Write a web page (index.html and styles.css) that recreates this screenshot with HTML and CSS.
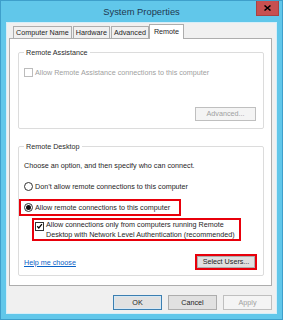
FILE: index.html
```html
<!DOCTYPE html>
<html>
<head>
<meta charset="utf-8">
<link rel="stylesheet" href="styles.css">
</head>
<body>
<div class="window">
  <div class="titlebar">
    <span></span>
    <div class="title">System Properties</div>
    <div class="close"><svg width="7" height="6" viewBox="0 0 7 6"><path d="M0.5 0.5 L6.5 5.5 M6.5 0.5 L0.5 5.5" stroke="#000" stroke-width="1.5" fill="none"/></svg></div>
  </div>
  <div class="client">
    <div class="tabs">
      <div class="tab">Computer Name</div>
      <div class="tab">Hardware</div>
      <div class="tab">Advanced</div>
      <div class="tab active">Remote</div>
    </div>
    <div class="panel">
      <fieldset class="group ga">
        <legend>Remote Assistance</legend>
        <div class="row disabled"><span class="box"></span><span>Allow Remote Assistance connections to this computer</span></div>
        <div class="btnrow"><button class="btn disabled adv">Advanced...</button></div>
      </fieldset>
      <fieldset class="group gd">
        <legend>Remote Desktop</legend>
        <p class="intro">Choose an option, and then specify who can connect.</p>
        <div class="row radiorow"><span class="radio"></span><span>Don’t allow remote connections to this computer</span></div>
        <div class="hl hl1"><span class="radio on"></span><span>Allow remote connections to this computer</span></div>
        <div class="hl hl2"><span class="box checked"><svg width="9" height="9" viewBox="0 0 9 9"><path d="M1.6 4.2 L3.6 6.4 L7.6 1.4" stroke="#000" stroke-width="1.6" fill="none"/></svg></span><span class="ml">Allow connections only from computers running Remote<br>Desktop with Network Level Authentication (recommended)</span></div>
        <div class="footer">
          <a class="link" href="#">Help me choose</a>
          <div class="hl hl3"><button class="btn sel">Select Users...</button></div>
        </div>
      </fieldset>
    </div>
    <div class="buttons">
      <button class="btn bottom def">OK</button>
      <button class="btn bottom">Cancel</button>
      <button class="btn bottom disabled">Apply</button>
    </div>
  </div>
</div>
</body>
</html>
```
FILE: styles.css
```css
* { box-sizing: border-box; }
html, body { margin: 0; padding: 0; }
body {
  width: 283px;
  height: 320px;
  overflow: hidden;
  font-family: "Liberation Sans", Arial, sans-serif;
  font-size: 7.2px;
  color: #1e1e1e;
}
.window {
  width: 283px;
  height: 320px;
  background: #61c7ea;
  border: 1px solid #3e9fcb;
  display: flex;
  flex-direction: column;
}
.titlebar {
  height: 21px;
  display: grid;
  grid-template-columns: 1fr auto 1fr;
  align-items: start;
}
.title {
  font-size: 9.4px;
  color: #1f3850;
  line-height: 20px;
  padding-top: 1px;
}
.close {
  justify-self: end;
  margin-right: 3px;
  width: 23px;
  height: 15px;
  background: #c75050;
  border: 1px solid #a84242;
  border-top: none;
  display: flex;
  align-items: center;
  justify-content: center;
}
.client {
  margin: 0 5px 5px 5px;
  flex: 1;
  background: #f0f0f0;
  box-shadow: inset 0 0 0 1px #d6eef8;
  display: flex;
  flex-direction: column;
  padding: 0 1px 0 1px;
}
.tabs {
  display: flex;
  align-items: flex-end;
  padding: 2px 0 0 6px;
  height: 16px;
  position: relative;
  z-index: 1;
}
.tab {
  height: 12px;
  line-height: 11px;
  padding: 0 2px 0 2px;
  border: 1px solid #adadad;
  border-bottom: none;
  background: #f0f0f0;
  margin-right: 1px;
  white-space: nowrap;
}
.tab.active {
  height: 15px;
  margin-bottom: -1px;
  background: #fff;
  padding: 1px 4px 0 4px;
  line-height: 11px;
  margin-left: -1px;
}
.panel {
  margin: 0 4px 0 2px;
  height: 248px;
  background: #fff;
  border: 1px solid #adadad;
  padding: 9px 7px 0 8px;
}
.group {
  margin: 0;
  border: 1px solid #dcdcdc;
  border-radius: 2px;
  padding: 0;
  min-width: 0;
}
.group legend {
  margin-left: 5px;
  padding: 0 2px;
  line-height: 9px;
  color: #2a2a2a;
}
.row {
  display: flex;
  align-items: center;
  height: 10px;
  white-space: nowrap;
}
.ga .row { margin: 10px 0 0 5px; }
.disabled { color: #a0a0a0; }
.box {
  width: 9px;
  height: 9px;
  border: 1px solid #333;
  background: #fff;
  margin-right: 2px;
  flex: none;
  display: flex;
  align-items: center;
  justify-content: center;
}
.box svg { display: block; }
.row.disabled .box { border-color: #bcbcbc; }
.btnrow {
  display: flex;
  justify-content: flex-end;
  margin: 30px 7px 7px 0;
}
.btn {
  font-family: "Liberation Sans", Arial, sans-serif;
  font-size: 7.2px;
  background: #e1e1e1;
  border: 1px solid #adadad;
  color: #1e1e1e;
  padding: 0;
  margin: 0;
  height: 14px;
  line-height: 12px;
}
.btn.disabled {
  background: #f4f4f4;
  border-color: #bfbfbf;
  color: #a0a0a0;
}
.adv { width: 61px; }
.gd { margin-top: 13px; padding-bottom: 5px; }
.intro { margin: 10px 0 0 5px; line-height: 10px; }
.radiorow { margin: 10px 0 0 5px; }
.radio {
  width: 9px;
  height: 9px;
  border: 1px solid #333;
  border-radius: 50%;
  background: #fff;
  margin-right: 2px;
  flex: none;
  display: flex;
  align-items: center;
  justify-content: center;
}
.radio.on::after {
  content: "";
  width: 5px;
  height: 5px;
  border-radius: 50%;
  background: #111;
}
.hl {
  border: 2px solid #e8000b;
}
.hl1 {
  margin-top: 8px;
  display: flex;
  align-items: center;
  height: 17px;
  width: 162px;
  padding-left: 3px;
  white-space: nowrap;
}
.hl2 {
  margin: 2px 0 0 13px;
  width: 209px;
  display: flex;
  align-items: flex-start;
  padding: 0 0 0 1px;
  line-height: 9.5px;
  white-space: nowrap;
}
.hl2 .box { margin-top: 2px; }
.footer {
  display: flex;
  justify-content: space-between;
  align-items: center;
  margin: 13px 6px 0 5px;
}
.link {
  color: #0a61c6;
  text-decoration: underline;
  line-height: 10px;
  margin-top: 1px;
}
.hl3 { display: flex; }
.sel { width: 58px; height: 12px; line-height: 10px; }
.buttons {
  display: flex;
  justify-content: flex-end;
  gap: 6px;
  margin: 9px 4px 0 0;
}
.bottom { width: 49px; height: 15px; line-height: 13px; }
.def { border-color: #3c7fb1; box-shadow: inset 0 0 0 1px #d6e8f4; }
```
